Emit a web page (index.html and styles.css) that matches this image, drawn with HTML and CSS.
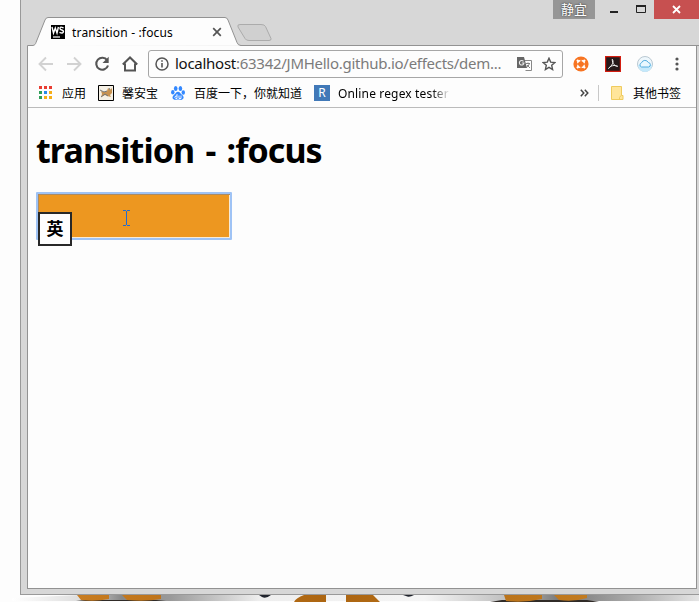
FILE: index.html
```html
<!DOCTYPE html>
<html lang="zh-CN">
<head>
<meta charset="utf-8">
<title>transition - :focus</title>
<link rel="stylesheet" href="styles.css">
</head>
<body>
<div class="window">
  <header class="titlebar">
    <svg class="tabshape" width="678" height="46" viewBox="0 0 678 46">
      <path d="M6.500 46V45.500H12C14 45 14.500 44 15 42.500L24 20Q25 17.500 27 17.500H204Q206 17.500 207 20L216 42.500Q217 45.500 220 45.500H678" fill="#fdfdfd" stroke="#929292"/>
      <path d="M220 46H678V45H219" fill="#929292"/>
      <path d="M219 24.500H240Q243.500 24.500 244.500 26.500L250 38.500Q250.500 40.500 248 40.500H228Q225 40.500 224 38.500L217 27Q216 24.500 219 24.500Z" fill="#d0d0d0" stroke="#ababab"/>
    </svg>
    <div class="tab">
      <svg width="14" height="14" viewBox="0 0 14 14"><rect width="14" height="14" fill="#000"/><path d="M1 2l1.500 6L4.300 3 6 8l1.400-6M12.600 3Q8.800 1 9 3.600C9.300 5.400 12.700 4.700 12.500 6.700Q12 9 8.500 7.300" fill="none" stroke="#fff" stroke-width="1.400"/><path d="M2 12h7" stroke="#fff" stroke-width="1.200"/></svg>
      <span class="tabtitle">transition - :focus</span>
      <svg class="tabclose" width="10" height="10" viewBox="0 0 10 10"><path d="M1.200 1.200l7.600 7.600M8.800 1.200L1.200 8.800" stroke="#555" stroke-width="1.700"/></svg>
    </div>
    <div class="controls">
      <span class="user">静宜</span>
      <svg width="59" height="19" viewBox="0 0 59 19"><path d="M15 12h8" stroke="#222" stroke-width="2"/><path d="M41.500 6.500h9v6h-9z" fill="none" stroke="#222"/><path d="M41 6h10" stroke="#222" stroke-width="2"/></svg>
      <span class="close"><svg width="9" height="9" viewBox="0 0 9 9"><path d="M1 1l7 7M8 1L1 8" stroke="#fff" stroke-width="1.800"/></svg></span>
    </div>
  </header>
  <main class="client">
    <nav class="toolbar">
      <svg class="nav" width="16" height="16" viewBox="0 0 16 16"><path d="M15 8H2M8 1.500L1.500 8 8 14.500" fill="none" stroke="#d2d2d2" stroke-width="1.900"/></svg>
      <svg class="nav" width="16" height="16" viewBox="0 0 16 16"><path d="M1 8h13M8 1.500L14.500 8 8 14.500" fill="none" stroke="#d2d2d2" stroke-width="1.900"/></svg>
      <svg class="nav" width="16" height="16" viewBox="0 0 16 16"><path d="M13.200 4.300A6 6 0 1 0 14 9.500" fill="none" stroke="#555" stroke-width="2.100"/><path d="M14.700.8V7H8.500z" fill="#555"/></svg>
      <svg class="nav" width="18" height="16" viewBox="0 0 18 16"><path d="M1.800 8.500L9 1.500l7.200 7M4 7.500v7h10v-7" fill="none" stroke="#555" stroke-width="2"/></svg>
      <div class="omnibox">
        <svg width="14" height="14" viewBox="0 0 14 14"><circle cx="7" cy="7" r="6" fill="none" stroke="#555" stroke-width="1.500"/><path d="M7 6v4.500M7 3.200v1.600" stroke="#555" stroke-width="1.600"/></svg>
        <span class="url"><b>localhost</b>:63342/JMHello.github.io/effects/dem...</span>
        <svg class="translate" width="15" height="14" viewBox="0 0 15 14"><path d="M6 3.500h8.500v10H8.500" fill="#fff" stroke="#888"/><path d="M0 0h7l3 11H0z" fill="#666"/><path d="M6.500 4.300A2.300 2.300 0 1 0 7 6H4.800" fill="none" stroke="#eee" stroke-width="1.100"/><path d="M9 6.500h4M11 5.500v1M12.500 6.500q-1 3-3 4M10 8l3 3" fill="none" stroke="#777" stroke-width=".9"/></svg>
        <svg class="star" width="14" height="14" viewBox="0 0 14 14"><path d="M7 1.200l1.700 3.900 4.200.4-3.200 2.800.9 4.200L7 10.300l-3.600 2.200.9-4.200L1.100 5.500l4.200-.4z" fill="none" stroke="#555" stroke-width="1.400"/></svg>
      </div>
      <svg class="ext" width="16" height="16" viewBox="0 0 16 16"><circle cx="8" cy="8" r="7.600" fill="#f77422"/><circle cx="8" cy="8" r="3.500" fill="none" stroke="#fff" stroke-width="1.300"/><path d="M4 4l1.800 1.800M12 4l-1.800 1.800M4 12l1.800-1.800M12 12l-1.800-1.800" stroke="#fff" stroke-width="2.200"/><path d="M8 3v3M8 10v3M3 8h3M10 8h3" stroke="#f77422" stroke-width="1.300"/></svg>
      <svg class="ext" width="16" height="16" viewBox="0 0 16 16"><path d="M.6.600h14.800v14.800H.6z" fill="#25191a" stroke="#d31d10" stroke-width="1.200"/><path d="M7.300 3.300C9.300 6 7 9.500 3.500 12.500 5 9.800 10 8.500 12.700 10.300 10.300 10.800 7 7.500 7.300 3.300z" fill="none" stroke="#eee"/></svg>
      <svg class="ext" width="16" height="16" viewBox="0 0 16 16"><circle cx="8" cy="8" r="7.500" fill="#eef7fc" stroke="#b9c8d1"/><path d="M1 9h14a7 7 0 0 1-14 0z" fill="#c5e9fb"/><path d="M4.500 11a2.200 2.200 0 0 1 0-4.200 3.700 3.700 0 0 1 6.800-.3 2.300 2.300 0 0 1 .4 4.500z" fill="#e9f8ff" stroke="#54aee0"/></svg>
      <svg class="menu" width="4" height="14" viewBox="0 0 4 14"><circle cx="2" cy="2" r="1.600" fill="#555"/><circle cx="2" cy="7" r="1.600" fill="#555"/><circle cx="2" cy="12" r="1.600" fill="#555"/></svg>
    </nav>
    <div class="bookmarks">
      <svg class="apps" width="14" height="14" viewBox="0 0 14 14"><path d="M0 0h3v3H0zM5 0h3v3H5zM10 0h3v3h-3z" fill="#e93d32"/><path d="M0 5h3v3H0zM0 10h3v3H0z" fill="#2f9f58"/><path d="M5 5h3v3H5z" fill="#2989e8"/><path d="M10 5h3v3h-3zM5 10h3v3H5zM10 10h3v3h-3z" fill="#f6ae16"/></svg>
      <span class="bm w24">应用</span>
      <svg class="fav" width="16" height="16" viewBox="0 0 16 16"><path d="M.5.500h15v15H.5z" fill="#f5f0e5" stroke="#000"/><path d="M3 6l3 1 3-1 1-3 2 2 2-2v5l-2 2 1 2-4-1-2-1-4 2 1-3z" fill="#c99350"/><path d="M2 5l4 2 3-1M3 12l4-3 3 2M11 3l1 2" fill="none" stroke="#73777a"/></svg>
      <span class="bm w36">馨安宝</span>
      <svg class="fav" width="16" height="16" viewBox="0 0 16 16"><g fill="#3388ff"><ellipse cx="5.700" cy="3.600" rx="1.800" ry="2.500"/><ellipse cx="10.400" cy="3.500" rx="1.800" ry="2.500"/><ellipse cx="2.800" cy="7.300" rx="1.700" ry="2.300"/><ellipse cx="13.300" cy="7.500" rx="1.700" ry="2.300"/><path d="M8 6.800c2 0 2.500 2 4.200 3.300 3 2.500.8 5.300-2 4.700-1.600-.3-2.500-.3-4.200 0-3 .5-4.900-2-2.200-4.700C5.500 8.700 6 6.800 8 6.800z"/></g><path d="M7 9v4.500H5.700Q4 12.500 5.700 11H7M9 10.500v3h2v-3" fill="none" stroke="#fff" stroke-width=".9"/></svg>
      <span class="bm w108">百度一下，你就知道</span>
      <span class="regex">R</span>
      <span class="bm online">Online regex tester</span>
      <svg class="more" width="9" height="8" viewBox="0 0 9 8"><path d="M.8.800L3.800 4l-3 3.200M4.800.800L7.800 4l-3 3.200" fill="none" stroke="#444" stroke-width="1.500"/></svg>
      <span class="divider"></span>
      <svg class="folder" width="13" height="14" viewBox="0 0 13 14"><path d="M.5.500h10v9h1.500v4H.5z" fill="#ffe59a" stroke="#efcb5e"/><path d="M8.500 13.500v-2l1.500-2" fill="none" stroke="#efcb5e"/></svg>
      <span class="bm">其他书签</span>
    </div>
    <section class="page">
      <h1>transition - :focus</h1>
      <div class="field">
        <svg class="cursor" width="7" height="16" viewBox="0 0 7 16"><path d="M0 .5h3M4 .5h3M3.500 1v14M0 15.500h3M4 15.500h3" stroke="#216bd0"/></svg>
        <span class="ime">英</span>
      </div>
    </section>
  </main>
</div>
<svg class="desktop" width="699" height="7" viewBox="0 0 699 7">
  <defs>
    <linearGradient id="shade"><stop offset="0" stop-color="#fff"/><stop offset=".1" stop-color="#ddd"/><stop offset=".16" stop-color="#888"/><stop offset=".23" stop-color="#999"/><stop offset=".36" stop-color="#eee"/><stop offset=".6" stop-color="#f5f5f5"/><stop offset=".73" stop-color="#bbb"/><stop offset=".8" stop-color="#777"/><stop offset=".9" stop-color="#aaa"/><stop offset="1" stop-color="#e5e5e5"/></linearGradient>
    <linearGradient id="foot"><stop offset="0" stop-color="#c87c20"/><stop offset=".5" stop-color="#ac6511"/><stop offset="1" stop-color="#c27b20"/></linearGradient>
  </defs>
  <path d="M12 3L80 0H699V6H12z" fill="url(#shade)"/>
  <path d="M76 6l10-1h70l10 1zM490 7l12-2h85l12 2z" fill="#302b27"/>
  <g fill="url(#foot)"><path d="M77 0h32v4q-14 3-28 1zM122 0h39v4q-16 3-34 1zM304 0h22v7h-32q2-4 10-7zM346 0h27l7 7h-34zM504 0h38v4q-18 4-36 2zM554 0h33v3q-13 4-28 2z"/></g>
  <path d="M259 0h12q-5 4-9 2zM403 0h11q-5 3-8 1z" fill="#20242d"/>
</svg>
</body>
</html>
```
FILE: styles.css
```css
* { box-sizing: border-box; }
body {
  margin: 0;
  width: 699px;
  height: 602px;
  overflow: hidden;
  background: #fdfdfd;
  font-family: "Noto Sans", "Noto Sans CJK SC", sans-serif;
  color: #000;
}
svg { display: block; flex: none; }
.window {
  margin-left: 20px;
  height: 595px;
  border-left: 1px solid #999;
  border-bottom: 1px solid #999;
  background: #d7d7d7;
}
.titlebar {
  display: grid;
  grid-template-columns: 210px 1fr;
  height: 46px;
}
.tabshape { grid-area: 1 / 1 / 2 / 3; }
.tab {
  grid-area: 1 / 1;
  display: flex;
  align-items: center;
  height: 28px;
  margin: 18px 0 0 30px;
}
.tabtitle {
  margin-left: 7px;
  width: 140px;
  font-size: 12px;
  letter-spacing: .17px;
}
.controls {
  grid-area: 1 / 2;
  justify-self: end;
  display: flex;
  height: 19px;
}
.user {
  width: 42px;
  background: #969696;
  color: #fff;
  font-size: 13px;
  line-height: 18px;
  text-align: center;
  text-shadow: 0 0 2px #222;
}
.close {
  display: grid;
  place-items: center;
  width: 45px;
  background: #c75050;
}
.client {
  width: 670px;
  height: 543px;
  margin-left: 6px;
  border: 1px solid #929292;
  border-top: 0;
  background: #fdfdfd;
}
.toolbar {
  display: flex;
  align-items: center;
  height: 36px;
  padding-left: 10px;
}
.nav { margin-right: 12px; }
.nav + .nav + .nav + .nav { margin: 0 9px 0 -1px; }
.omnibox {
  display: flex;
  align-items: center;
  width: 415px;
  height: 28px;
  padding: 0 6px;
  margin-right: 10px;
  border: 1px solid #a6a6a6;
  border-radius: 3px;
}
.url {
  width: 342px;
  margin-left: 6px;
  padding-bottom: 2px;
  font-size: 15px;
  letter-spacing: -.27px;
  line-height: 24px;
  color: #7b7b7b;
  white-space: nowrap;
}
.url b { font-weight: 400; color: #111; }
.star { margin-left: 10px; }
.ext { margin-right: 16px; }
.menu { margin-left: 6px; }
.bookmarks {
  display: flex;
  align-items: center;
  height: 26px;
  padding: 0 0 3px 11px;
  border-bottom: 1px solid #bbb;
  font-size: 12px;
}
.bm { white-space: nowrap; }
.apps { margin-right: 9px; }
.w24 { width: 36px; }
.w36 { width: 48px; }
.w108 { width: 120px; }
.fav { margin-right: 8px; }
.regex {
  width: 16px;
  height: 16px;
  margin-right: 8px;
  background: #4179b8;
  color: #fff;
  font-size: 12px;
  line-height: 16px;
  text-align: center;
}
.online {
  width: 112px;
  letter-spacing: .15px;
  overflow: hidden;
  -webkit-mask-image: linear-gradient(90deg, #000 84%, transparent);
  mask-image: linear-gradient(90deg, #000 84%, transparent);
}
.more { margin-left: 130px; }
.divider {
  width: 1px;
  height: 16px;
  margin: 0 12px 0 9px;
  background: #c8c8c8;
}
.folder { margin-right: 9px; }
.page { padding: 17px 8px; }
h1 {
  margin: 0 0 17px;
  font-size: 34px;
  letter-spacing: -.9px;
  word-spacing: 3.2px;
  line-height: 50px;
  font-weight: 700;
  white-space: nowrap;
}
.field {
  position: relative;
  width: 196px;
  height: 48px;
  border: 2px solid #9fc3f5;
  border-radius: 1px;
  background: #ed9720;
  box-shadow: inset 1px 1px #a98b66, inset -1px -1px #f7ead7;
}
.cursor { position: absolute; left: 85px; top: 16px; }
.ime {
  position: absolute;
  left: 0;
  top: 18px;
  width: 34px;
  height: 34px;
  border: 2px solid #282828;
  background: #fdfdfd;
  font-size: 17px;
  font-weight: 700;
  line-height: 29px;
  text-align: center;
}
```
